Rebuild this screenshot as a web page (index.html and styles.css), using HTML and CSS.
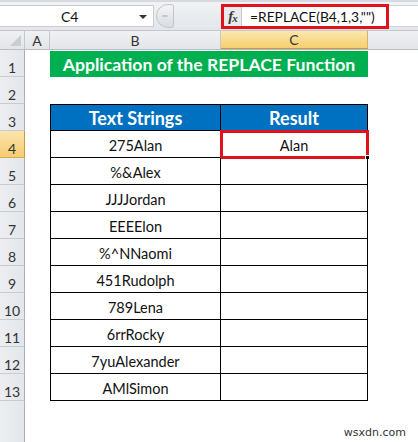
FILE: index.html
```html
<!DOCTYPE html>
<html>
<head>
<meta charset="utf-8">
<link rel="stylesheet" href="styles.css">
</head>
<body>
<div class="app">
  <div class="fbar">
    <div class="namebox"><span class="nb-text">C4</span><span class="nb-arrow"></span></div>
    <div class="knob"><span class="knob-dash"></span></div>
    <div class="fbar-gap"></div>
    <div class="formula">
      <span class="fx">f<span class="fx-x">x</span></span>
      <span class="ftext">=REPLACE(B4,1,3,"")</span>
    </div>
    <div class="fbar-rest"></div>
  </div>
  <div class="sheet">
    <div class="row colhead">
      <div class="corner"><span class="tri"></span></div>
      <div class="ch">A</div>
      <div class="ch">B</div>
      <div class="ch ch-sel">C</div>
      <div class="ch ch-fill"></div>
    </div>
    <div class="row">
      <div class="rh">1</div><div class="cell"></div>
      <div class="title">Application of the REPLACE Function</div>
      <div class="cell"></div>
    </div>
    <div class="row">
      <div class="rh">2</div><div class="cell"></div><div class="cell"></div><div class="cell"></div><div class="cell"></div>
    </div>
    <div class="row">
      <div class="rh">3</div><div class="cell"></div>
      <div class="th tb-b tb-top">Text Strings</div>
      <div class="th tb-c tb-top">Result</div>
      <div class="cell"></div>
    </div>
    <div class="row">
      <div class="rh rh-sel">4</div><div class="cell"></div>
      <div class="td tb-b">275Alan</div>
      <div class="td tb-c active">Alan<span class="handle"></span></div>
      <div class="cell"></div>
    </div>
    <div class="row"><div class="rh">5</div><div class="cell"></div><div class="td tb-b">%&amp;Alex</div><div class="td tb-c"></div><div class="cell"></div></div>
    <div class="row"><div class="rh">6</div><div class="cell"></div><div class="td tb-b">JJJJordan</div><div class="td tb-c"></div><div class="cell"></div></div>
    <div class="row"><div class="rh">7</div><div class="cell"></div><div class="td tb-b">EEEElon</div><div class="td tb-c"></div><div class="cell"></div></div>
    <div class="row"><div class="rh">8</div><div class="cell"></div><div class="td tb-b">%^NNaomi</div><div class="td tb-c"></div><div class="cell"></div></div>
    <div class="row"><div class="rh">9</div><div class="cell"></div><div class="td tb-b">451Rudolph</div><div class="td tb-c"></div><div class="cell"></div></div>
    <div class="row"><div class="rh">10</div><div class="cell"></div><div class="td tb-b">789Lena</div><div class="td tb-c"></div><div class="cell"></div></div>
    <div class="row"><div class="rh">11</div><div class="cell"></div><div class="td tb-b">6rrRocky</div><div class="td tb-c"></div><div class="cell"></div></div>
    <div class="row"><div class="rh">12</div><div class="cell"></div><div class="td tb-b">7yuAlexander</div><div class="td tb-c"></div><div class="cell"></div></div>
    <div class="row"><div class="rh">13</div><div class="cell"></div><div class="td tb-b">AMlSimon</div><div class="td tb-c"></div><div class="cell"></div></div>
    <div class="row row-last">
      <div class="rh rh-empty"></div>
      <div class="foot"><span class="watermark">wsxdn.com</span></div>
    </div>
  </div>
</div>
</body>
</html>
```

FILE: styles.css
```css
* { box-sizing: border-box; }
html, body { margin: 0; padding: 0; }
body {
  width: 418px;
  height: 442px;
  overflow: hidden;
  background: #fff;
  font-family: "Lato", "Open Sans", sans-serif;
  color: #000;
}
.app {
  display: flex;
  flex-direction: column;
  height: 442px;
}
.fbar {
  height: 31px;
  display: flex;
  align-items: center;
  background: linear-gradient(#f1f3f5, #e3e6ea);
  border-top: 2px solid #d6d9de;
  border-bottom: 1px solid #c4c8cd;
  flex: none;
}
.namebox {
  width: 154px;
  height: 22px;
  background: #fff;
  border: 1px solid #c9ccd1;
  border-left: none;
  position: relative;
  display: flex;
  align-items: center;
}
.nb-text {
  margin-left: 61px;
  font-size: 14px;
  color: #111;
}
.nb-arrow {
  position: absolute;
  right: 6px;
  top: 9px;
  width: 0;
  height: 0;
  border-left: 4px solid transparent;
  border-right: 4px solid transparent;
  border-top: 4px solid #333;
}
.knob {
  width: 18px;
  height: 24px;
  margin-left: 2px;
  border-radius: 12px 3px 3px 12px;
  background: linear-gradient(#f4f5f7, #d9dce0);
  border: 1px solid #c2c5ca;
  display: flex;
  align-items: center;
  justify-content: center;
}
.knob-dash {
  width: 6px;
  height: 2px;
  background: #c5c8cc;
  border-radius: 1px;
}
.fbar-gap {
  width: 47px;
  height: 100%;
}
.formula {
  width: 168px;
  height: 25px;
  border: 3px solid #e0121c;
  display: flex;
  align-items: stretch;
  background: #fff;
}
.fx {
  width: 18px;
  background: #e8eaed;
  border-right: 1px solid #c6c9ce;
  font-family: "Liberation Serif", serif;
  font-style: italic;
  font-weight: bold;
  font-size: 15px;
  color: #3a3a3a;
  display: flex;
  align-items: center;
  justify-content: center;
  letter-spacing: -1px;
}
.fx-x { font-size: 11px; margin-top: 4px; }
.ftext {
  margin-left: 8px;
  font-size: 13.8px;
  line-height: 19px;
  color: #111;
  white-space: nowrap;
}
.fbar-rest {
  flex: 1;
  height: 22px;
  background: #fff;
  border-top: 1px solid #d0d3d8;
  border-bottom: 1px solid #d0d3d8;
}
.sheet {
  flex: 1;
  display: flex;
  flex-direction: column;
}
.row {
  display: grid;
  grid-template-columns: 25px 25px 171px 147px 1fr;
  height: 27px;
  flex: none;
}
.colhead {
  height: 19px;
  background: linear-gradient(#f0f1f3, #e2e5e9);
  border-bottom: 1px solid #b9bdc3;
}
.corner {
  position: relative;
  border-right: 1px solid #c3c7cc;
}
.tri {
  position: absolute;
  right: 3px;
  bottom: 3px;
  width: 0;
  height: 0;
  border-left: 11px solid transparent;
  border-bottom: 11px solid #c9ccd0;
}
.ch {
  border-right: 1px solid #c3c7cc;
  font-size: 14px;
  color: #333;
  display: flex;
  align-items: center;
  justify-content: center;
}
.ch-sel {
  background: linear-gradient(#fbe7b1, #f6cf6e);
  border-right: 1px solid #d9b25a;
  border-bottom: 1px solid #c79a3c;
}
.ch-fill { border-right: none; }
.rh {
  background: linear-gradient(90deg, #eceef1, #e3e6ea);
  border-right: 1px solid #a9aeb5;
  border-bottom: 1px solid #c8ccd1;
  font-size: 14px;
  color: #333;
  display: flex;
  align-items: center;
  justify-content: center;
  padding-top: 9px;
}
.rh-sel {
  background: linear-gradient(#fbe5ad, #f5cc6e);
  border-bottom: 1px solid #d3ac5a;
  border-right: 1px solid #c79a3c;
}
.rh-empty { border-bottom: none; }
.cell { background: #fff; }
.title {
  grid-column: 3 / span 2;
  background: #00b050;
  color: #fff;
  font-weight: bold;
  font-size: 17.6px;
  display: flex;
  align-items: center;
  justify-content: center;
  margin-top: 1px;
}
.th, .td {
  display: flex;
  align-items: center;
  justify-content: center;
  border-bottom: 1px solid #000;
  border-right: 1px solid #000;
  position: relative;
}
.tb-b { border-left: 1px solid #000; }
.tb-top { border-top: 1px solid #000; }
.th {
  background: #0070c0;
  color: #fff;
  font-weight: bold;
  font-size: 18px;
}
.td {
  font-size: 14.5px;
  color: #111;
  padding-top: 2px;
}
.active {
  outline: 3px solid #e0121c;
  outline-offset: -2px;
}
.handle {
  position: absolute;
  right: -3px;
  bottom: -3px;
  width: 5px;
  height: 5px;
  background: #000;
  border: 1px solid #fff;
}
.row-last {
  flex: 1;
  height: auto;
  grid-template-columns: 25px 1fr;
}
.foot {
  position: relative;
}
.watermark {
  position: absolute;
  right: 12px;
  bottom: 3px;
  font-family: "DejaVu Sans", sans-serif;
  font-size: 11px;
  color: #333;
}
```
